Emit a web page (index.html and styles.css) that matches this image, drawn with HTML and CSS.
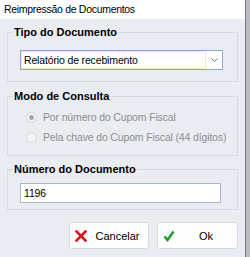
FILE: index.html
```html
<!DOCTYPE html>
<html lang="pt">
<head>
<meta charset="utf-8">
<title>Reimpressão de Documentos</title>
<link rel="stylesheet" href="styles.css">
</head>
<body>
<div class="screen">
  <div class="window">
    <div class="titlebar">Reimpressão de Documentos</div>
    <div class="content">
      <fieldset class="group g1">
        <legend>Tipo do Documento</legend>
        <div class="combo">
          <div class="combo-text">Relatório de recebimento</div>
          <div class="combo-arrow">
            <svg width="7" height="4" viewBox="0 0 7 4"><path d="M0.5 0.5 L3.5 3.5 L6.5 0.5" fill="none" stroke="#6b6f76" stroke-width="1"/></svg>
          </div>
        </div>
      </fieldset>
      <fieldset class="group g2">
        <legend>Modo de Consulta</legend>
        <div class="radio-row"><span class="radio checked"></span><span class="radio-label">Por número do Cupom Fiscal</span></div>
        <div class="radio-row"><span class="radio"></span><span class="radio-label">Pela chave do Cupom Fiscal (44 dígitos)</span></div>
      </fieldset>
      <fieldset class="group g3">
        <legend>Número do Documento</legend>
        <div class="input">1196</div>
      </fieldset>
      <div class="buttons">
        <div class="btn">
          <svg class="btn-icon" width="12" height="12" viewBox="0 0 12 12"><path d="M1.5 1.5 L10.5 10.5 M10.5 1.5 L1.5 10.5" stroke="#d8141c" stroke-width="2.6" stroke-linecap="square"/></svg>
          <span class="btn-text">Cancelar</span>
        </div>
        <div class="btn">
          <svg class="btn-icon" width="12" height="12" viewBox="0 0 12 12"><path d="M1.5 6.5 L4.5 10 L10.5 1.5" fill="none" stroke="#1c9a2a" stroke-width="2.4" stroke-linejoin="miter"/></svg>
          <span class="btn-text">Ok</span>
        </div>
      </div>
    </div>
  </div>
  <div class="edge"></div>
</div>
</body>
</html>
```
FILE: styles.css
```css
* { box-sizing: border-box; }
html, body { margin: 0; padding: 0; }
body {
  width: 250px;
  height: 257px;
  overflow: hidden;
  font-family: "Liberation Sans", Arial, sans-serif;
  font-size: 10.5px;
  letter-spacing: -0.15px;
  color: #000;
  background: #e9ecf0;
}
.screen { display: flex; height: 257px; }
.window {
  width: 245px;
  background: #e9ecf0;
  display: flex;
  flex-direction: column;
}
.edge {
  width: 5px;
  background: #b9bcc1;
  border-left: 1px solid #75787d;
}
.titlebar {
  height: 19px;
  background: #fff;
  font-size: 10.5px;
  letter-spacing: -0.3px;
  line-height: 18px;
  padding-left: 4px;
  color: #000;
}
.content {
  padding: 7px 7px 0 7px;
  display: flex;
  flex-direction: column;
}
.group {
  margin: 0;
  border: 1px solid #d7dbe1;
  padding: 0 14px 0 12px;
  min-width: 0;
}
.group legend {
  font-weight: bold;
  font-size: 11px;
  letter-spacing: 0;
  line-height: 13px;
  padding: 0 1px;
  margin-left: -7px;
}
.g1 { padding-top: 11px; padding-bottom: 11px; }
.g2 { margin-top: 8px; padding-top: 4px; padding-bottom: 8px; }
.g3 { margin-top: 7px; padding-top: 7px; padding-bottom: 6px; }

.combo {
  height: 20px;
  border: 1px solid #8ea6d2;
  background: #fff;
  display: flex;
}
.combo-text {
  flex: 1;
  border: 1px solid #fbe3c3;
  padding-left: 2px;
  line-height: 16px;
}
.combo-arrow {
  width: 16px;
  display: flex;
  align-items: center;
  justify-content: center;
}
.radio-row {
  height: 20px;
  display: flex;
  align-items: center;
  color: #8b8f96;
  white-space: nowrap;
}
.radio {
  flex: none;
  width: 11px;
  height: 11px;
  border-radius: 50%;
  border: 1px solid #cfd3d9;
  background: #f4f5f7;
  margin-left: 6px;
  margin-right: 6px;
  display: flex;
  align-items: center;
  justify-content: center;
}
.radio.checked::after {
  content: "";
  width: 5px;
  height: 5px;
  border-radius: 50%;
  background: #a4a8ae;
}
.input {
  width: 201px;
  height: 20px;
  border: 1px solid #a9b6cf;
  background: #fff;
  padding-left: 3px;
  line-height: 18px;
}
.buttons {
  display: flex;
  justify-content: flex-end;
  gap: 8px;
  margin-top: 12px;
}
.btn {
  width: 80px;
  height: 27px;
  background: #fdfdfd;
  border: 1px solid #d8dce2;
  border-radius: 3px;
  display: flex;
  align-items: center;
  padding-left: 5px;
}
.btn:last-child { width: 81px; }
.btn-icon { flex: none; }
.btn-text {
  flex: 1;
  text-align: center;
  font-size: 11px;
  letter-spacing: 0;
}
```
